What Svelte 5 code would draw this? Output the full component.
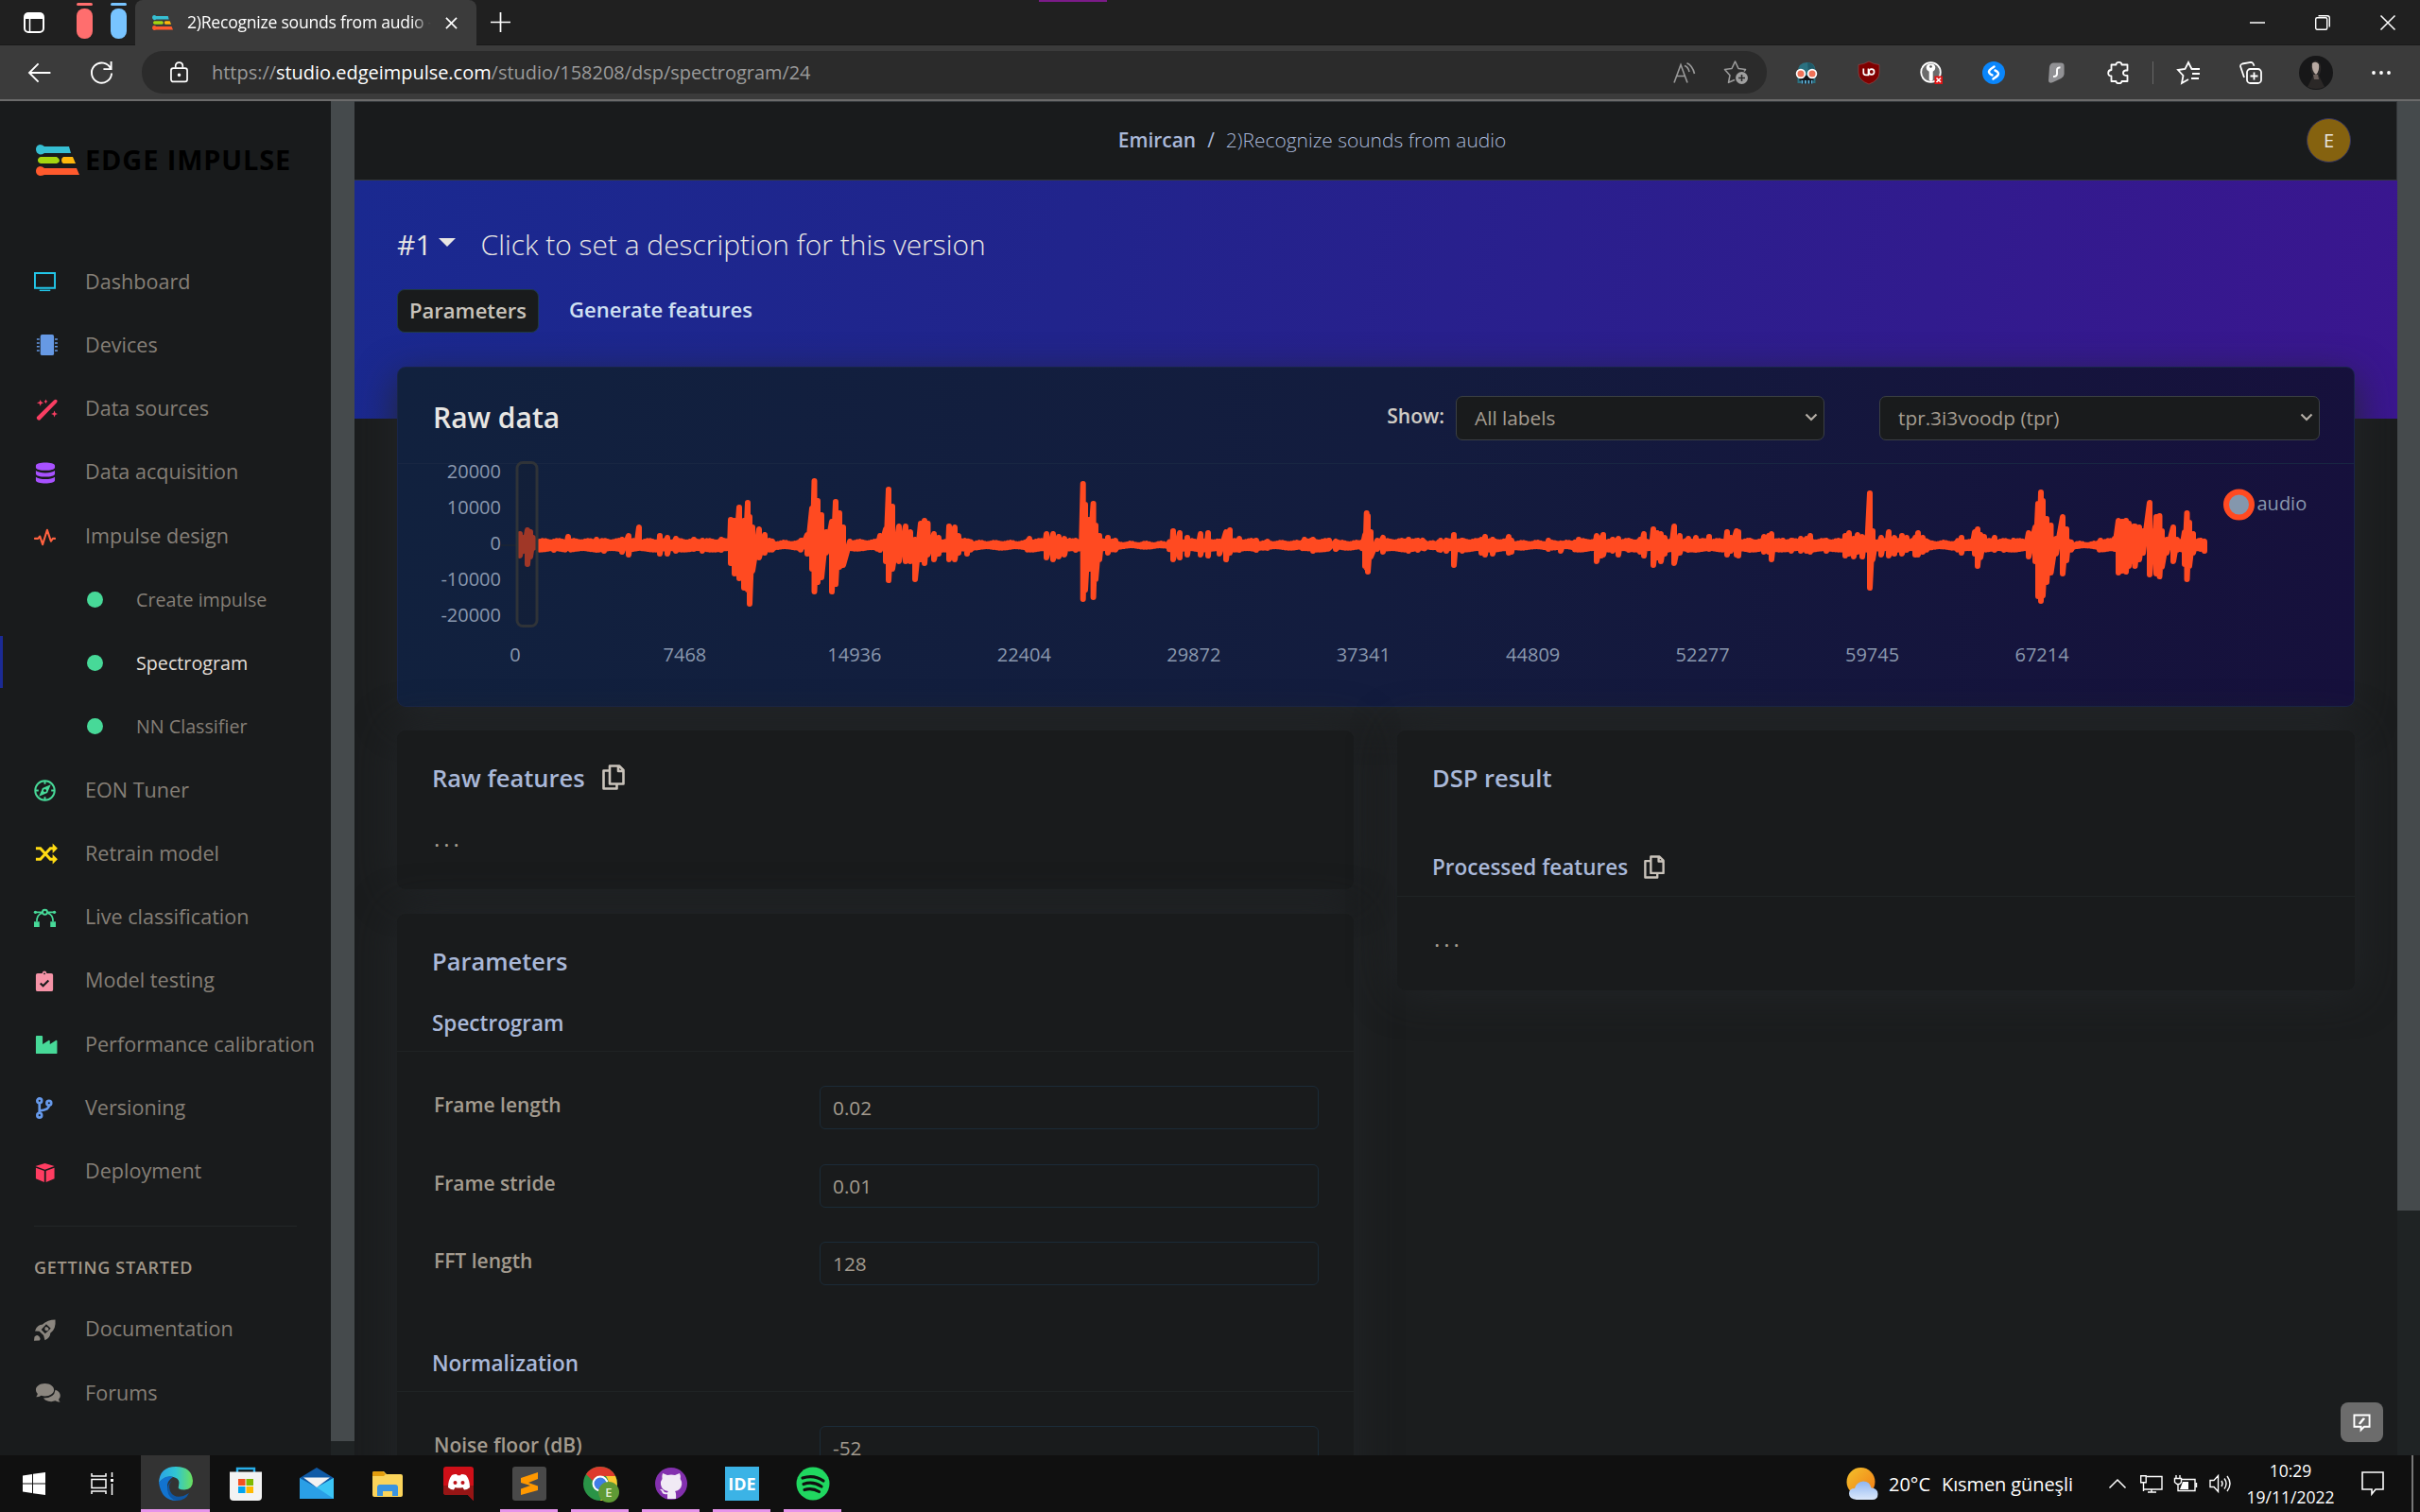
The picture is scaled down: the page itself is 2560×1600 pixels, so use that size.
<script>
  const nav = [
    { label: 'Dashboard', icon: 'monitor', color: '#22c8ea' },
    { label: 'Devices', icon: 'chip', color: '#6699e4' },
    { label: 'Data sources', icon: 'wand', color: '#f93e62' },
    { label: 'Data acquisition', icon: 'database', color: '#a851ff' },
    { label: 'Impulse design', icon: 'pulse', color: '#ff6240' },
    { label: 'Create impulse', sub: true },
    { label: 'Spectrogram', sub: true, active: true },
    { label: 'NN Classifier', sub: true },
    { label: 'EON Tuner', icon: 'compass', color: '#47d998' },
    { label: 'Retrain model', icon: 'shuffle', color: '#ffdb13' },
    { label: 'Live classification', icon: 'bezier', color: '#47d998' },
    { label: 'Model testing', icon: 'clipboard', color: '#f593a7' },
    { label: 'Performance calibration', icon: 'factory', color: '#47d998' },
    { label: 'Versioning', icon: 'branch', color: '#6699ea' },
    { label: 'Deployment', icon: 'box', color: '#ff3d62' }
  ];
  const help = [
    { label: 'Documentation', icon: 'rocket', color: '#8b867f' },
    { label: 'Forums', icon: 'chat', color: '#8b867f' }
  ];
  const yTicks = ['20000', '10000', '0', '-10000', '-20000'];
  const xTicks = ['0', '7468', '14936', '22404', '29872', '37341', '44809', '52277', '59745', '67214'];
  const fields = [
    { label: 'Frame length', value: '0.02' },
    { label: 'Frame stride', value: '0.01' },
    { label: 'FFT length', value: '128' }
  ];

  // Peaks of the audio trace: x, height above and depth below the zero line.
  const peaks = [
    [550,15,14],[554,11,9],[558,19,23],[561,17,15],[564,11,6],[586,7,8],[601,12,6],[631,9,8],[639,7,9],[658,9,10],[665,13,13],[676,22,6],
    [698,13,12],[706,11,12],[715,10,9],[734,9,7],[743,8,9],[763,9,8],[773,30,22],[777,29,33],[782,43,38],[787,29,48],
    [791,48,50],[793,33,65],[796,22,30],[803,20,16],[809,14,11],[848,8,6],[854,14,12],[859,42,28],[861.5,71,52],[865,50,42],
    [869,35,37],[874,17,11],[880,28,52],[884,49,44],[888,37,26],[892,22,24],[899,7,6],[931,13,8],[937,20,20],[940,62,40],
    [944,44,28],[951,23,20],[958,23,20],[963,17,20],[968,9,39],[974,26,18],[978,29,22],[981.5,26,13],[988,15,18],[993,11,12],
    [1004,23,18],[1010,22,18],[1014,13,11],[1023,6,12],[1089,10,6],[1107,15,16],[1114,15,18],[1120,12,15],[1126,10,13],
    [1138,8,8],[1145.7,68,60],[1148,46,50],[1152,30,28],[1156.6,47,58],[1159,24,39],[1163,13,18],[1172,11,11],
    [1241,18,18],[1248,16,16],[1256,11,13],[1270,15,13],[1278,16,14],[1290,7,12],[1297,17,18],[1301,19,11],[1311,10,8],
    [1329,8,8],[1341,7,6],[1380,9,6],[1389,9,9],[1406,8,6],[1413,7,7],[1444,14,25],[1445.7,37,27],[1447,34,31],[1450,17,15],
    [1457,8,7],[1463,11,10],[1490,9,9],[1500,8,8],[1505,8,6],[1524,8,8],[1530,8,9],[1538,14,24],[1547,8,9],[1567,9,11],
    [1571,12,13],[1579,9,12],[1596,12,11],[1599,8,10],[1638,8,7],[1651,5,9],[1670,9,7],[1689,13,20],[1694,11,14],[1696,14,13],
    [1706,9,9],[1712,10,13],[1723,8,8],[1735,9,10],[1739,15,14],[1749,20,24],[1753,16,16],[1757,15,20],[1761,11,12],[1771,23,22],
    [1777,13,11],[1786,10,8],[1794,11,8],[1808,12,7],[1827,17,13],[1831,11,9],[1837,18,13],[1839,17,14],[1851,8,8],[1866,12,10],
    [1871,13,10],[1874,15,18],[1886,8,7],[1895,8,9],[1905,10,9],[1911,10,9],[1915,13,10],[1932,8,9],[1952,13,14],[1956,16,12],
    [1961,10,15],[1965,14,10],[1970,12,15],[1978,58,48],[1981,18,18],[1990,11,13],[1998,17,14],[2004,11,12],[2012,13,12],
    [2017,11,8],[2026,11,13],[2029,16,13],[2034,11,10],[2075,11,11],[2089,17,12],[2092,20,25],[2095,14,16],[2099,12,7],
    [2110,11,8],[2120,7,8],[2130,8,7],[2146,16,15],[2153,22,20],[2156,47,57],[2159,59,62],[2161,50,56],[2165,31,42],
    [2169.5,24,32],[2175,10,12],[2182,33,33],[2186,20,19],[2222,8,6],[2237,10,7],[2241,29,32],[2245,28,30],[2249,29,31],
    [2252,26,25],[2257,23,20],[2258.5,23,25],[2263,22,18],[2267,18,11],[2274,48,34],[2278,18,20],[2281,33,33],[2284.5,34,36],
    [2287,18,26],[2292,9,11],[2299,22,20],[2303,9,8],[2311,17,23],[2313.5,37,39],[2316,27,25],[2320,15,11],[2328,8,7],[2332,7,9]
  ];
  const quiet = [[818,845,5],[900,925,6],[1028,1085,5],[1182,1236,4],[1330,1376,5],[1415,1440,5],[1508,1520,4.5],[1600,1665,5],[2040,2068,5],[2192,2218,4]];
  function floorAt(x) {
    for (const [a, b, h] of quiet) if (x >= a && x <= b) return h;
    return 7;
  }

  // Low-level signal between the peaks; closely spaced peaks join up directly.
  const samples = peaks.filter(([x]) => x > 570);
  for (let x = 571; x <= 2331; x += 3) {
    let prev = -99, next = 9999;
    for (const [px] of peaks) {
      if (px <= x) prev = px;
      else { next = px; break; }
    }
    if (x === prev || next - prev <= 7) continue;
    const n = floorAt(x);
    samples.push([x, n + Math.sin(x * 1.7) * 0.8, n + Math.cos(x * 2.3) * 0.8]);
  }
  samples.sort((a, b) => a[0] - b[0]);
  const trace = (list) => list.map(([x, u, w], i) => `${i ? 'L' : 'M'}${x} ${92 - u}L${x} ${86 + w}`).join('');
  const d = trace(samples);
  const dSel = trace(peaks.filter(([x]) => x < 570)) + 'L569 89';
</script>

{#snippet icon(name)}
  <svg class="ico" viewBox="0 0 24 24" fill="currentColor">
    {#if name === 'monitor'}
      <path fill="none" stroke="currentColor" stroke-width="2" d="M1 2h22v16.500H1z" /><path d="M6 20.500h12V22H6z" />
    {:else if name === 'chip'}
      <rect x="7" y="0" width="15" height="23" rx="2" /><path d="M3 4.500h3v1.600H3zM3 8.500h3v1.600H3zM3 12.500h3v1.600H3zM3 17h3v1.600H3zM23 4.500h3v1.600h-3zM23 8.500h3v1.600h-3zM23 12.500h3v1.600h-3zM23 17h3v1.600h-3z" />
    {:else if name === 'wand'}
      <path d="M3 20L22 1.500q2-1.200 3.400 0 .9 1.300-.5 3L6.500 23.500q-1.500.5-2.700-.6Q2.500 21.500 3 20zM7 1l1 2.500L10.500 4.500 8 5.500 7 8 6 5.500 3 4.500 6 3.500zM13 .5l.7 1.700L15 3l-1.300.7L13 5.500l-.7-1.700L11 3l1.300-.8zM22.500 13l1 2.700 2.500 1-2.500 1-1 2.700-1-2.700-2.700-1 2.700-1z" />
    {:else if name === 'database'}
      <path d="M2 4c0-4.600 21-4.600 21 0v2c0 4.300-21 4.300-21 0zM2 9.500c4 3.200 17 3.200 21 0V13c0 4.300-21 4.300-21 0zM2 16.500c4 3.200 17 3.200 21 0V20c0 4.600-21 4.600-21 0z" />
    {:else if name === 'pulse'}
      <path fill="none" stroke="currentColor" stroke-width="2.200" stroke-linejoin="round" stroke-linecap="round" d="M1 14.500h3.500l2-2.500L9.500 21l5-16 4.200 12.500 2-3H23" />
    {:else if name === 'compass'}
      <circle cx="12" cy="12" r="10.700" fill="none" stroke="currentColor" stroke-width="2" /><path d="M18.500 5.500l-3.800 9.200-9.200 3.800 3.800-9.200zM11 2h2v3h-2zM11 19h2v3h-2zM2 11h3v2H2zM19 11h3v2h-3z" /><circle cx="12" cy="12" r="1.600" fill="#191b1c" />
    {:else if name === 'shuffle'}
      <path fill="none" stroke="currentColor" stroke-width="3.200" d="M2 6h5l11 12h4M2 18h5L18 6h4" /><path d="M20.500.5L26 6l-5.500 5.500zM20.500 12.500L26 18l-5.500 5.500z" />
    {:else if name === 'bezier'}
      <path d="M0 16h6v6H0zM18 16h6v6h-6z" /><path fill="none" stroke="currentColor" stroke-width="1.800" d="M1 5.500h22M3 16q0-8 6-9.500M21 16q0-8-6-9.500" /><circle cx="12" cy="5.500" r="2.600" fill="#191b1c" stroke="currentColor" stroke-width="2" /><circle cx="1.500" cy="5.500" r="1.700" /><circle cx="22.500" cy="5.500" r="1.700" />
    {:else if name === 'clipboard'}
      <path d="M4 3h5q.5-2.500 2.500-2.500T14 3h5q2 0 2 2v16q0 2-2 2H4q-2 0-2-2V5q0-2 2-2z" /><circle cx="11.500" cy="3.500" r="1" fill="#191b1c" /><path fill="none" stroke="#191b1c" stroke-width="2.200" d="M7 14l3 3 6-6" />
    {:else if name === 'factory'}
      <path d="M2 3q0-1 1-1h5.500q1 0 1 1v8.500L16.500 7q1 0 1 1v3.500L24.500 7q1 0 1 1v13q0 1-1 1H3q-1 0-1-1z" />
    {:else if name === 'branch'}
      <g fill="none" stroke="currentColor" stroke-width="2.800"><circle cx="6" cy="4" r="2.500" /><circle cx="6" cy="20" r="2.500" /><circle cx="16.500" cy="6.500" r="2.500" /><path d="M6 7v10M16.500 9.500q0 4.500-10 5.500" /></g>
    {:else if name === 'box'}
      <path d="M12 2l10.500 3.300L12 9 1.500 5.300zM2 7l9.300 3.500V23L2 19zM22.500 7l-9.300 3.500V23l9.300-4z" />
    {:else if name === 'rocket'}
      <path fill-rule="evenodd" d="M23.500.5Q24.500 11 18 15.500q0 5-6 7.800l-1.500-5.500-4.700-4.400L1 13q1-4 3.500-5.500Q6.500 5.500 9 6q6-5.500 14.500-5.500zM13.500 5.500L8 11.500l4.300 4.300 6.200-5.500zM14 8.500q2.200.3 2.200 2.200t-2.200 2.100-2.200-2.200T14 8.500z" /><path d="M.5 19.500Q3 16.500 5.500 19t.5 4.500L0 23.800z" />
    {:else if name === 'chat'}
      <path d="M12 1c5.500 0 10 3 10 7s-4.500 7-10 7q-2 0-4-.6Q5.500 16 2.300 16 3.500 14.500 4 12.500 2 10.500 2 8c0-4 4.500-7 10-7z" /><path d="M23.500 8q5.500 2 5.500 6.500 0 2-1.800 3.900.5 1.800 1.600 3.200-3.200 0-5.400-1.400-5.500 2-11-1-1.200-.7-2-1.900Q22.500 17 23.500 8z" />
    {/if}
  </svg>
{/snippet}

{#snippet copy()}
  <svg class="copy" viewBox="0 0 24 27" fill="none" stroke="#c9c3ba" stroke-width="2.600" stroke-linejoin="round">
    <path d="M8 1.500h10l4.500 4.500v14.500H8zM17 2v5h5M7.500 6.500h-6v19h14v-4.500" />
  </svg>
{/snippet}

{#snippet navRow(item)}
  <li class:sub={item.sub} class:active={item.active}>
    <span class="slot" style:color={item.color}>
      {#if item.sub}<i class="dot"></i>{:else}{@render icon(item.icon)}{/if}
    </span>
    <span>{item.label}</span>
  </li>
{/snippet}

{#snippet chevron()}
  <svg class="chev" viewBox="0 0 14 9" fill="none" stroke="#b5afa6" stroke-width="2.200"><path d="M1.500 1.500L7 7l5.500-5.500" /></svg>
{/snippet}

<div class="screen">
  <header class="tabs">
    <svg class="tabicon" viewBox="0 0 22 22"><rect x="1" y="1" width="20" height="20" rx="4" fill="none" stroke="#fff" stroke-width="2" /><path d="M1 3q0-2 3-2h14q3 0 3 2v4H1z" fill="#fff" /><path d="M6.500 7v14" stroke="#fff" stroke-width="1.500" /></svg>
    <span class="group red"></span>
    <span class="group blue"></span>
    <div class="tab">
      <svg class="fav" viewBox="0 0 46 33"><path fill="#36bfd3" d="M4 0q3 0 5 2h26l2 7H9q-2 1.500-5 1.500Q0 9 0 5T4 0z" /><path fill="#a5d610" d="M5 13h17q3 2 3 4t-3 3H5q-3-1-3-3.500T5 13z" /><path fill="#ffb80c" d="M29 13h10l3 7H29q-2-1-2-3.500t2-3.500z" /><path fill="#ff5a2d" d="M4 23q3 0 5 2h34l3 7H9q-2 1-5 1-4-1-4-5t4-5z" /></svg>
      <span class="title">2)Recognize sounds from audio -</span>
      <svg class="x" viewBox="0 0 14 14" stroke="#fff" stroke-width="1.800"><path d="M1 1l12 12M13 1L1 13" /></svg>
    </div>
    <svg class="plus" viewBox="0 0 22 22" stroke="#fff" stroke-width="1.800"><path d="M11 0v22M0 11h22" /></svg>
    <i class="accent"></i>
    <div class="win">
      <svg viewBox="0 0 16 16" stroke="#fff" stroke-width="1.500"><path d="M0 8h16" /></svg>
      <svg viewBox="0 0 16 16" fill="none" stroke="#fff" stroke-width="1.400"><rect x=".7" y="2.700" width="12" height="12.500" rx="1.500" /><path d="M3.500.7H13q2.300 0 2.300 2.300v9.500" /></svg>
      <svg viewBox="0 0 16 16" stroke="#fff" stroke-width="1.500"><path d="M.5.5l15 15M15.500.5l-15 15" /></svg>
    </div>
  </header>

  <div class="toolbar">
    <svg class="back" viewBox="0 0 26 24" fill="none" stroke="#fff" stroke-width="2"><path d="M12 1.500L1.500 12 12 22.500M1.500 12H26" /></svg>
    <svg class="reload" viewBox="0 0 26 26" fill="none" stroke="#fff" stroke-width="2"><path d="M23 9A11 11 0 1 0 24 14M23.500 1v8.500H15" /></svg>
    <div class="url">
      <svg class="lock" viewBox="0 0 20 24" fill="none" stroke="#fff" stroke-width="1.800"><rect x="1" y="7.500" width="18" height="15" rx="2.500" /><path d="M6 7V5q0-4 4-4t4 4v2" /><circle cx="10" cy="15" r="1" fill="#fff" /></svg>
      <span class="addr">https://<b>studio.edgeimpulse.com</b>/studio/158208/dsp/spectrogram/24</span>
      <svg class="read" viewBox="0 0 24 22" fill="none" stroke="#9a9a9a" stroke-width="1.600"><path d="M1 21.500L8 2.500l7 19M3.500 14.500h9M12 3.500q4 1.500 5 6.500M14.500.8q6 2.700 8 11.200" /></svg>
      <svg class="fave" viewBox="0 0 26 25" fill="none" stroke="#9a9a9a" stroke-width="1.600" stroke-linejoin="round"><path d="M12 20.500l-6.500 2.800 1.500-7.600L1.500 9.500l7.500-1L12.500 1 16 8.500l7.500 1-1.500 2" /><circle cx="19.500" cy="18.500" r="6.500" fill="#a0a0a0" stroke="none" /><path d="M19.500 15v7M16 18.500h7" stroke="#2b2b2b" /></svg>
    </div>
    <div class="exts">
      <svg viewBox="0 0 24 24"><path d="M2.500 12Q3 1 12.500 1t9 11v11h-19z" fill="#2b7180" /><path d="M13 1q8 1 8 10h-7z" fill="#1f5a68" /><path d="M4.500 15h15v5.500h-15z" fill="#121418" /><path d="M6 20h13v3.500H6z" fill="#14191f" /><path d="M6.500 20h1.800v3.500H6.500zM10 20h1.800v3.500H10zM13.500 20h1.800v3.500h-1.800zM17 20h1.500v3.500H17z" fill="#5fb6dd" /><circle cx="6" cy="13" r="4.400" fill="#ee7258" stroke="#fff" stroke-width="1.700" /><circle cx="18" cy="13" r="4.400" fill="#ee7258" stroke="#fff" stroke-width="1.700" /></svg>
      <svg viewBox="0 0 24 24"><path d="M12 0q5 3 11 3.500V12q0 8-11 12Q1 20 1 12V3.500Q7 3 12 0z" fill="#800000" stroke="#9b4b4b" stroke-width=".6" /><path d="M6.300 7.500v4.500q0 2.300 2.500 2.300h2.700V7.500" fill="none" stroke="#fff" stroke-width="1.700" /><circle cx="14.800" cy="11" r="2.800" fill="none" stroke="#fff" stroke-width="1.700" /></svg>
      <svg viewBox="0 0 24 24"><circle cx="11.500" cy="11.500" r="10.300" fill="#6c6c6c" stroke="#fff" stroke-width="1.800" /><path d="M11.500 2.500q4.800 0 4.800 4.300 0 2.700-2.600 4v8.700l-2 2-2-2v-8.700q-3-1.300-3-4 0-4.300 4.800-4.300z" fill="#fff" /><circle cx="11.500" cy="5.500" r="1.300" fill="#555" /><path d="M15.500 15.500H24V24h-8.500z" fill="#e01515" /><path d="M17.500 17.500l4.500 4.500M22 17.500L17.500 22" stroke="#fff" stroke-width="1.600" /></svg>
      <svg viewBox="0 0 24 24"><circle cx="12" cy="12" r="12" fill="#0a86fb" /><path d="M10.500 14.500C8 13.500 6 11.500 7.500 9.500 8.500 8 11 6.500 12.500 5.500M13.500 9.500C16 10.500 18 12.500 16.500 14.500 15.500 16 13 17.500 11.500 18.500" fill="none" stroke="#fff" stroke-width="2.500" stroke-linecap="round" /></svg>
      <svg viewBox="0 0 24 24"><path d="M9 1.500h8q4 0 3.600 4v8q-.3 3-3.300 4.500l-9 4.300Q4 23.500 4 20.500L5 6q.5-4 4-4.500z" fill="#919194" /><path d="M16.500 6.500q-3.500-.5-3.500 3v3.500q0 3-4 3" fill="none" stroke="#fff" stroke-width="2" /></svg>
      <svg viewBox="0 0 24 24" fill="none" stroke="#fff" stroke-width="1.800" stroke-linejoin="round"><path d="M4.500 3.500H9.500q0-2.700 3-2.700t3 2.700h6v6h-2q-2.500.5-2.500 2.700t2.500 2.700h2v6.100h-6q0 2.200-3 2.200t-3-2.200h-5v-5.500q-3.300 0-3.300-3.200t3.300-3.300z" /></svg>
    </div>
    <i class="sep"></i>
    <div class="exts">
      <svg viewBox="0 0 24 24" fill="none" stroke="#fff" stroke-width="1.800"><path d="M12 19l-7 4 1.500-8L1 9l7.500-1L12 1l3.500 7H24M16 13h8M15 18h8" /></svg>
      <svg viewBox="0 0 24 24" fill="none" stroke="#fff" stroke-width="1.800"><rect x="8" y="8" width="15" height="15" rx="3.500" /><path d="M15.500 11.500v8M11.500 15.500h8M5 17L1 5q0-2 2-2.500L12 .8q2.500 0 3.500 4" /></svg>
      <svg class="me" viewBox="0 0 36 36"><circle cx="18" cy="18" r="18" fill="#171718" /><path d="M13 8q5-6 9 0 3 6-1 13l6 12q-9 4-18 0l6-12q-4-6-2-13z" fill="#2b2827" /><path d="M14 8q4-3 7 1 1 7-3 11-5-4-4-12z" fill="#b9aaa2" /><path d="M15 20h5l1 5h-5z" fill="#6b5f5a" /></svg>
      <svg viewBox="0 0 24 24" fill="#fff"><circle cx="4" cy="12" r="1.900" /><circle cx="12" cy="12" r="1.900" /><circle cx="20" cy="12" r="1.900" /></svg>
    </div>
  </div>

  <div class="page">
    <aside>
      <div class="logo">
        <svg viewBox="0 0 46 33"><path fill="#36bfd3" d="M4 0q3 0 5 2h26l2 7H9q-2 1.500-5 1.500Q0 9 0 5T4 0z" /><path fill="#a5d610" d="M5 13h17q3 2 3 4t-3 3H5q-3-1-3-3.500T5 13z" /><path fill="#ffb80c" d="M29 13h10l3 7H29q-2-1-2-3.500t2-3.500z" /><path fill="#ff5a2d" d="M4 23q3 0 5 2h34l3 7H9q-2 1-5 1-4-1-4-5t4-5z" /></svg>
        <span>EDGE IMPULSE</span>
      </div>
      <ul>{#each nav as item}{@render navRow(item)}{/each}</ul>
      <hr />
      <h6>GETTING STARTED</h6>
      <ul>{#each help as item}{@render navRow(item)}{/each}</ul>
    </aside>
    <div class="sidebar-scroll"><i></i></div>

    <main>
      <div class="crumbs">
        <p><b>Emircan</b><span class="slash">/</span><span>2)Recognize sounds from audio</span></p>
        <span class="avatar">E</span>
      </div>
      <section class="hero">
        <h2><span class="num">#1</span><i class="caret"></i><span class="desc">Click to set a description for this version</span></h2>
        <nav><span class="pill">Parameters</span><span>Generate features</span></nav>
      </section>

      <div class="content">
        <section class="card raw">
          <div class="rawhead">
            <h3>Raw data</h3>
            <span class="show">Show:</span>
            <div class="select labels">All labels{@render chevron()}</div>
            <div class="select sample">tpr.3i3voodp (tpr){@render chevron()}</div>
          </div>
          <svg class="chart" viewBox="421 488 2070 258">
            {#each yTicks as t, i}<text class="tick end" x="530" y={506 + i * 38}>{t}</text>{/each}
            {#each xTicks as t, i}<text class="tick mid" x={545 + i * 179.450} y="700">{t}</text>{/each}
            <path d="M530 577H546" stroke="#1b2533" stroke-width="1.500" />
            <g transform="translate(0 488)" fill="none" stroke="#ff4a21" stroke-width="6" stroke-linecap="round" stroke-linejoin="round">
              <path d={dSel} opacity=".7" />
              <path {d} />
            </g>
            <rect x="547" y="489.500" width="21" height="173" rx="6" fill="#1b1e22" fill-opacity=".15" stroke="#2f3338" stroke-width="3" />
            <circle cx="2368.500" cy="534" r="13.500" fill="#8497ad" stroke="#ff4a21" stroke-width="6" />
            <text class="tick" x="2387.500" y="540">audio</text>
          </svg>
        </section>

        <div class="cols">
          <div class="left">
            <section class="card feat">
              <h4>Raw features {@render copy()}</h4>
              <p class="dots">...</p>
            </section>
            <section class="card params">
              <h4>Parameters</h4>
              <h5>Spectrogram</h5>
              <div class="fields">
                {#each fields as f}
                  <label>{f.label}<span class="input">{f.value}</span></label>
                {/each}
              </div>
              <h5>Normalization</h5>
              <div class="fields">
                <label>Noise floor (dB)<span class="input">-52</span></label>
              </div>
            </section>
          </div>
          <section class="card dsp">
            <h4>DSP result</h4>
            <h5>Processed features {@render copy()}</h5>
            <p class="dots">...</p>
          </section>
        </div>
      </div>
      <div class="feedback"><svg viewBox="0 0 20 20" fill="none" stroke="#fff" stroke-width="2"><path d="M1.500 1.500h17v13h-6L9 18v-3.500H1.500zM7 11.500l5-6.500M8 11l5-6" /></svg></div>
    </main>
    <div class="page-scroll"><i></i></div>
  </div>

  <footer>
    <div class="app"><svg class="s24" viewBox="0 0 24 24" fill="#fff"><path d="M0 3.500L10 2v9.500H0zM11 1.800L24 0v11.500H11zM0 12.500h10V22L0 20.500zM11 12.500h13V24l-13-1.800z" /></svg></div>
    <div class="app view"><svg class="s24" viewBox="0 0 24 24" fill="none" stroke="#fff" stroke-width="1.500"><path d="M1 1v3h15V1M1 23v-3h15v3M1 7.500h15v9H1zM22.500 0v5M22.500 12v12" /><path d="M21 7h3v3h-3z" fill="#fff" stroke="none" /></svg></div>
    <div class="app on wide">
      <svg class="s36" viewBox="0 0 36 36"><defs><linearGradient id="eg" x1="0" x2="1"><stop offset="0" stop-color="#2aa3e8" /><stop offset=".5" stop-color="#30c5d2" /><stop offset="1" stop-color="#6be05d" /></linearGradient></defs><path d="M0 17Q1 0 18 0t18 15q0 9-9 9.500-8 0-6-4 2-7-4-9Q8 8 0 17z" fill="url(#eg)" /><path d="M0 17q7-9 15-6-7 4-6 12 2 10 11 13Q3 37 0 17z" fill="#1273cf" /><path d="M15 14q-6 4-3 12 4 8 14 5l6-3q-4 8-13 8-9-2-10-12 0-6 6-10z" fill="#0e57a4" /></svg>
    </div>
    <div class="app"><svg class="s36" viewBox="0 0 36 36"><path d="M9 7V2h18v5" fill="none" stroke="#28aee8" stroke-width="2.400" /><path d="M1 5.500h34V32q0 4-4 4H5q-4 0-4-4z" fill="#f3f3f3" /><path d="M10 13h7.500v7H10z" fill="#f25022" /><path d="M18.500 13H26v7h-7.500z" fill="#7fba00" /><path d="M10 21h7.500v7H10z" fill="#00a4ef" /><path d="M18.500 21H26v7h-7.500z" fill="#ffb900" /></svg></div>
    <div class="app"><svg class="s36" viewBox="0 0 36 36"><path d="M0 12L18 1l18 11v22H0z" fill="#0f5aa6" /><path d="M0 12l18 10 18-10v22H0z" fill="#2a9fe6" /><path d="M36 12v22L18 22z" fill="#3bc5f5" /><path d="M4 11.500h28L18 22z" fill="#f2f2f2" /></svg></div>
    <div class="app"><svg class="s36" viewBox="0 0 36 36"><path d="M2 7q0-2 2-2h10l3 3h15q2 0 2 2v20q0 2-2 2H4q-2 0-2-2z" fill="#fbd45b" /><path d="M2 7q0-2 2-2h9l3 3-2 2H2z" fill="#e39d0d" /><path d="M7 31V22q0-3 3-3h16q3 0 3 3v9h-6v-5H13v5z" fill="#3a94e0" /></svg></div>
    <div class="app"><svg class="s36" viewBox="0 0 36 36"><path d="M2 3q0-3 3-3h26q3 0 3 3v33l-6-6H5q-3 0-3-3z" fill="#cf0f18" /><path d="M2 20h32v16l-6-6H5q-3 0-3-3z" fill="#961515" /><path d="M7 22q0-8 4-13 3-1.500 5-1l1 1.300h3l1-1.300q3 0 5 1 4 5 4 13-3 2.500-6 2.500L22.500 22q-4 1-8 0L13 24.500Q10 24.500 7 22z" fill="#fff" /><circle cx="14.500" cy="17" r="2" fill="#bc1118" /><circle cx="22.500" cy="17" r="2" fill="#bc1118" /></svg></div>
    <div class="app on"><svg class="s36" viewBox="0 0 36 36"><rect width="36" height="36" rx="3" fill="#494949" /><path d="M9 12l18-6v7l-10 4 10 3.500v4.500L9 30v-6.500L19 20 9 17z" fill="#ff9800" /></svg></div>
    <div class="app on"><svg class="s36" viewBox="0 0 36 36"><circle cx="18" cy="18" r="18" fill="#2a9447" /><path d="M18 0a18 18 0 0 1 16 10H18a9 9 0 0 0-8 5L3 8A18 18 0 0 1 18 0z" fill="#de3a2c" /><path d="M34 10a18 18 0 0 1-16 26l8-13q3-6-2-13z" fill="#fcc931" /><circle cx="18" cy="18" r="8.500" fill="#fff" /><circle cx="18" cy="18" r="6.500" fill="#3f7ee8" /><circle cx="27" cy="27" r="11" fill="#5f9a35" /><text x="27" y="32" class="badge">E</text></svg></div>
    <div class="app on"><svg class="s36" viewBox="0 0 36 36"><circle cx="18" cy="18" r="17" fill="#8330ae" /><path d="M9 7l5 2q4-1 8 0l5-2q1.500 3 .7 6 2 3 1.500 6-1 6-7.200 7 1.500 1.500 1 8h-9v-5q-5 1-6-3l-2-2q3-1 5 3l3 .5.800-1.500Q8 25 7 19q-.3-4 1.500-6Q8 10 9 7z" fill="#f1eaf5" /></svg></div>
    <div class="app on"><svg class="s36" viewBox="0 0 36 36"><path d="M0 0h36v36H0z" fill="#3bb3e6" /><text x="18" y="25" class="ide">IDE</text></svg></div>
    <div class="app on"><svg class="s36" viewBox="0 0 36 36"><circle cx="18" cy="18" r="17.500" fill="#20d760" /><path d="M7 12q12-4 22 3M8 18.500q10-3.500 19 2.500M9 24.500q8-2.500 15.500 2" fill="none" stroke="#101010" stroke-width="3.200" stroke-linecap="round" /></svg></div>

    <div class="tray">
      <svg class="sun" viewBox="0 0 34 34"><defs><linearGradient id="sg" x1="0" y1="0" x2="1" y2="1"><stop offset="0" stop-color="#f2c22c" /><stop offset="1" stop-color="#f37a15" /></linearGradient><linearGradient id="cg" x1="0" y1="0" x2="0" y2="1"><stop offset="0" stop-color="#8fb6f2" /><stop offset="1" stop-color="#dbe8fb" /></linearGradient></defs><circle cx="15.500" cy="15" r="15" fill="url(#sg)" /><path d="M11 34Q3 33 3 27.500T9 22q2-7 9-7.500 7 0 8.500 7 7 .5 7 6.500t-6 6z" fill="url(#cg)" /></svg>
      <span class="temp">20°C</span><span class="cond">Kısmen güneşli</span>
      <svg class="up" viewBox="0 0 18 10" fill="none" stroke="#fff" stroke-width="1.500"><path d="M.5 9.500L9 1l8.500 8.500" /></svg>
      <svg class="net" viewBox="0 0 24 19" fill="none" stroke="#fff" stroke-width="1.400"><path d="M7 1.500h16v13.500H4M12 15v3M8 18h9M.7.7h5.500v7H.7zM3.500 8v9" /></svg>
      <svg class="bat" viewBox="0 0 24 19" fill="none" stroke="#fff" stroke-width="1.400"><path d="M7 4.500h15v12H5M23.500 8v5M2 0v3M6 0v3M.5 3.500h7v4l-2 2H3l-2.500-2zM4 10v6.500h4" /><path d="M9 7h6v8H6z" fill="#fff" stroke="none" /></svg>
      <svg class="vol" viewBox="0 0 24 20" fill="none" stroke="#fff" stroke-width="1.400"><path d="M1 6.500h4L9.500 1.500v17L5 13.500H1zM13 7q2 3 0 6M16 4.500q4 5.500 0 11M19 2q6 8 0 16" /></svg>
      <div class="clock"><span>10:29</span><span>19/11/2022</span></div>
      <svg class="note" viewBox="0 0 24 26" fill="none" stroke="#fff" stroke-width="1.600"><path d="M1 1h22v18h-8l-4 5v-5H1z" /></svg>
      <i class="edge"></i>
    </div>
  </footer>
</div>

<style>
  :global(body) { margin: 0; background: #181a1b; }
  :global(*) { box-sizing: border-box; }
  .screen { width: 2560px; height: 1600px; overflow: hidden; display: flex; flex-direction: column; font-family: "Open Sans", sans-serif; color: #a39b8f; }
  svg { display: block; flex: none; overflow: visible; }
  h2, h3, h4, h5, h6, p, ul { margin: 0; padding: 0; }

  .tabs { height: 48px; flex: none; background: #202020; display: flex; align-items: center; position: relative; border-bottom: 1px solid #1a1a1a; }
  .tabicon { width: 22px; height: 22px; margin-left: 25px; }
  .group { width: 17px; height: 32px; border-radius: 8px; margin: 2px 0 0 34px; position: relative; }
  .group::before { content: ""; position: absolute; top: -6px; left: 0; width: 17px; height: 3px; background: inherit; border-radius: 2px; }
  .red { background: #ff6e6e; }
  .blue { background: #78c4ff; margin-left: 19px; }
  .tab { width: 361px; height: 48px; margin: 1px 0 0 9px; padding-left: 18px; background: #3b3b3b; border-radius: 8px 8px 0 0; display: flex; align-items: center; }
  .fav { width: 22px; height: 16px; }
  .title { margin: -2px 0 0 15px; width: 258px; font-size: 17.600px; letter-spacing: -.25px; color: #fff; white-space: nowrap; overflow: hidden; -webkit-mask-image: linear-gradient(90deg, #000 92%, transparent); mask-image: linear-gradient(90deg, #000 92%, transparent); }
  .x { width: 13px; height: 13px; margin-left: 15px; }
  .plus { width: 21px; height: 21px; margin-left: 15px; }
  .accent { position: absolute; left: 1099px; top: 0; width: 72px; height: 2px; background: #7b1b88; }
  .win { margin-left: auto; display: flex; gap: 53px; padding-right: 26px; }
  .win svg { width: 16px; height: 16px; }

  .toolbar { height: 59px; flex: none; background: #3b3b3b; border-bottom: 2px solid #6b6b6b; display: flex; align-items: center; }
  .back { width: 25px; height: 22px; margin-left: 29px; }
  .reload { width: 25px; height: 25px; margin: 0 30px 0 41px; }
  .url { width: 1719px; height: 45px; border-radius: 22px; background: #2b2b2b; display: flex; align-items: center; padding-left: 30px; }
  .lock { width: 19px; height: 23px; }
  .addr { margin: -1px 0 0 25px; width: 1546px; font-size: 19.950px; color: #9b9b9b; white-space: nowrap; }
  .addr b { font-weight: 400; color: #fff; }
  .read { width: 24px; height: 22px; }
  .fave { width: 26px; height: 25px; margin-left: 29px; }
  .exts { display: flex; align-items: center; gap: 42px; }
  .exts svg { width: 24px; height: 24px; }
  .exts .me { width: 36px; height: 36px; margin: 0 -3px; }
  .url + .exts { margin-left: 30px; }
  .sep { width: 1px; height: 24px; background: #666; margin: 0 25px 0 24px; }

  .page { flex: 1; min-height: 0; display: flex; background: #1b1d1e; }
  aside { width: 350px; background: #191b1c; overflow: hidden; }
  .logo { height: 156px; padding: 46px 0 0 38px; display: flex; align-items: flex-start; gap: 6px; }
  .logo svg { width: 46px; height: 33px; }
  .logo span { font: 700 28.900px/31px "Open Sans", sans-serif; color: #000; letter-spacing: .9px; white-space: nowrap; }
  ul { list-style: none; }
  li { height: 67.250px; display: flex; align-items: center; font-size: 21.600px; color: #857f77; white-space: nowrap; padding: 1px 0 0 36px; }
  .slot { width: 54px; flex: none; padding-top: 3px; }
  .ico { width: 23px; height: 23px; }
  li.sub { font-size: 19.700px; padding: 3px 0 0 93px; }
  li.sub .slot { width: 51px; padding-top: 0; }
  .dot { display: block; width: 17px; height: 17px; border-radius: 50%; background: #47d998; margin-left: -1px; }
  li.active { color: #e3dfd8; background: linear-gradient(#1b2a94, #1b2a94) 0 50% / 3px 55px no-repeat; }
  hr { border: 0; height: 1px; background: #232627; margin: 25px 36px 0; }
  h6 { font: 600 18px/30px "Open Sans", sans-serif; letter-spacing: .7px; color: #a09688; padding: 28px 0 16px 36px; }
  .sidebar-scroll { width: 25px; background: #1f2324; }
  .sidebar-scroll i { display: block; height: 1418px; background: #454a4c; }
  .page-scroll { width: 24px; background: #1f2324; }
  .page-scroll i { display: block; height: 1174px; background: #454a4c; }

  main { width: 2161px; position: relative; overflow: hidden; background: #1b1d1e; }
  .crumbs { height: 84px; display: flex; align-items: center; justify-content: center; background: #191b1c; border: 1px solid #33373a; border-width: 1px 1px 1px 0; position: relative; }
  .crumbs p { font-size: 20.950px; font-weight: 300; white-space: nowrap; position: relative; left: -67px; top: -1px; color: #a9b8d8; }
  .crumbs b { font-weight: 600; }
  .slash { margin: 0 12px; font-weight: 400; }
  .avatar { position: absolute; right: 48px; top: 17px; width: 47px; height: 47px; border-radius: 50%; background: #85620f; border: 1px solid #34345e; color: #e8e6e3; font-size: 20px; line-height: 45px; text-align: center; }
  .hero { height: 252px; padding: 45px 0 0 45px; background: linear-gradient(100deg, #1a2990, #21248c 35%, #3a168f); }
  h2 { height: 44px; display: flex; align-items: center; color: #e8e6e3; white-space: nowrap; }
  .num { font-size: 30px; font-weight: 400; }
  .caret { border: 9px solid transparent; border-top: 9px solid #e8e6e3; border-bottom: 0; margin: -4px 27px 0 7px; }
  .desc { font-size: 29.950px; font-weight: 300; }
  nav { display: flex; margin-top: 26px; height: 46px; align-items: center; gap: 32px; font-size: 22.050px; font-weight: 600; color: #cfe0f2; white-space: nowrap; line-height: 43px; }
  nav span:last-child { margin-top: -3px; }
  .pill { width: 150px; height: 46px; border-radius: 8px; background: #191b1c; border: 1px solid #203a40; color: #c8c3bb; text-align: center; }

  .content { padding: 0 45px; margin-top: -55px; }
  .card { background: #191b1c; border-radius: 9px; box-shadow: 0 0 46px rgba(35, 39, 42, .9); position: relative; }
  .raw { height: 360px; background: linear-gradient(95deg, #11213e, #131c3e 50%, #16103c); border: 1px solid #192548; box-shadow: 0 12px 40px rgba(35, 39, 42, .9); }
  .rawhead { height: 102px; border-bottom: 1px solid #182642; display: flex; align-items: center; padding: 6px 36px 0 37px; font-size: 20.800px; }
  h3 { font-size: 30px; font-weight: 600; color: #e8e6e3; margin: -3px auto 0 0; }
  .show { font-size: 21.100px; font-weight: 600; color: #d0ccc5; margin: -6px 12px 0 0; }
  .select { height: 47px; border: 1px solid #3b4043; border-radius: 7px; background: #191b1c; display: flex; align-items: center; justify-content: space-between; padding: 0 6px 2px 19px; color: #a59d91; }
  .labels { width: 390px; margin-right: 58px; }
  .sample { width: 466px; }
  .chev { width: 14px; height: 9px; }
  .chart { width: 2070px; height: 258px; margin-top: -3px; }
  .tick { font-size: 20px; fill: #8a98ae; }
  .end { text-anchor: end; }
  .mid { text-anchor: middle; }

  .cols { display: flex; gap: 46px; margin-top: 25px; align-items: flex-start; }
  .left { width: 1012px; display: flex; flex-direction: column; gap: 26px; }
  .dsp { flex: 1; height: 275px; }
  .feat { height: 168px; }
  .params { height: 700px; }
  h4 { font-size: 25.500px; line-height: 40px; font-weight: 600; color: #a9b8d8; padding: 30px 0 0 37px; display: flex; align-items: center; gap: 18px; }
  h5 { font-size: 22.500px; line-height: 34px; font-weight: 600; color: #a9b8d8; padding: 29px 0 12px 37px; border-bottom: 1px solid #1f2324; display: flex; align-items: center; gap: 17px; }
  .copy { width: 24px; height: 27px; margin-top: -2px; }
  h5 .copy { width: 22px; height: 25px; }
  .dots { font-size: 24px; line-height: 30px; letter-spacing: 4px; padding: 29px 0 0 39px; color: #a39b8f; }
  .fields { padding: 36px 37px 0 39px; display: flex; flex-direction: column; gap: 36px; height: 284px; }
  .fields label { display: flex; justify-content: space-between; font-size: 21px; font-weight: 600; line-height: 41px; height: 46.500px; flex: none; color: #a39b8f; }
  .input { width: 528px; height: 46px; border: 1px solid #1b2b38; border-radius: 6px; font-size: 20.800px; font-weight: 400; line-height: 45px; padding-left: 13px; }
  .dsp h5 { padding-top: 58px; padding-bottom: 13px; }
  .feedback { position: absolute; left: 2101px; top: 1377px; width: 45px; height: 42px; border-radius: 8px; background: #6c6c6c; display: flex; align-items: center; justify-content: center; }
  .feedback svg { width: 19px; height: 19px; }

  footer { height: 60px; flex: none; background: #101010; display: flex; color: #fff; font-size: 20px; }
  .app { width: 75px; height: 60px; display: flex; align-items: center; justify-content: center; position: relative; }
  .app:first-child { width: 72px; }
  .app.view { width: 72px; margin-right: 5px; }
  .app.wide { width: 73px; background: #333; }
  .app.on::after { content: ""; position: absolute; left: 7px; right: 7px; bottom: 0; height: 3px; background: #e593ea; }
  .app.wide::after { left: 0; right: 0; }
  .s24 { width: 24px; height: 24px; }
  .s36 { width: 36px; height: 36px; }
  .badge { font: 600 13px "Open Sans", sans-serif; fill: #e5efd9; text-anchor: middle; }
  .ide { font: 700 18px "Open Sans", sans-serif; fill: #fff; text-anchor: middle; }
  .tray { margin-left: auto; display: flex; align-items: center; white-space: nowrap; width: 607px; }
  .sun { width: 34px; height: 34px; }
  .temp { margin-left: 11px; width: 56px; }
  .cond { width: 177px; letter-spacing: -.1px; }
  .up { width: 18px; height: 10px; }
  .net { width: 24px; height: 19px; margin-left: 15px; }
  .bat { width: 24px; height: 19px; margin-left: 12px; }
  .vol { width: 24px; height: 20px; margin-left: 13px; }
  .clock { width: 136px; margin-left: -6px; display: flex; flex-direction: column; align-items: center; line-height: 28px; font-size: 17.500px; }
  .note { width: 24px; height: 26px; margin-left: 7px; }
  .edge { width: 2px; height: 60px; background: #777; margin-left: auto; margin-right: 7px; }
</style>
